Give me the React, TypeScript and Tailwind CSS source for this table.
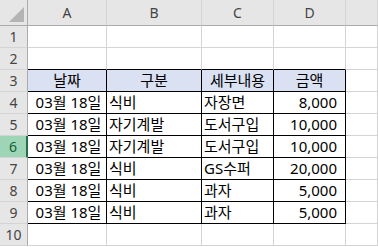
const columns = ["A", "B", "C", "D", ""];

type Row = [string, string, string, string];

const expenses: Row[] = [
  ["03월 18일", "식비", "자장면", "8,000"],
  ["03월 18일", "자기계발", "도서구입", "10,000"],
  ["03월 18일", "자기계발", "도서구입", "10,000"],
  ["03월 18일", "식비", "GS수퍼", "20,000"],
  ["03월 18일", "식비", "과자", "5,000"],
  ["03월 18일", "식비", "과자", "5,000"],
];

const heading: Row = ["날짜", "구분", "세부내용", "금액"];

const font = {
  fontFamily: '"Noto Sans", "Noto Sans CJK KR", sans-serif',
};

function ColumnHeader({ label }: { label: string }) {
  return (
    <div className="flex items-center justify-center border-r border-b border-r-[#d4d4d4] border-b-[#ababab] bg-[#e6e6e6] text-[14px] text-[#444]">
      {label}
    </div>
  );
}

function RowHeader({ n, active }: { n: number; active: boolean }) {
  return (
    <div
      className={
        active
          ? "flex items-center justify-center border-r-2 border-b border-r-[#217346] border-b-[#d4d4d4] bg-[#9fd5b7] text-[14px] text-[#0f6233]"
          : "flex items-center justify-center border-r border-b border-r-[#ababab] border-b-[#d4d4d4] bg-[#e6e6e6] text-[14px] text-[#444]"
      }
    >
      {n}
    </div>
  );
}

function Cell({
  text = "",
  col,
  row,
}: {
  text?: string;
  col: number;
  row: number;
}) {
  const inTable = col < 4 && row >= 3 && row <= 9;
  const bottomDark = col < 4 && row >= 2 && row <= 9;
  const isHead = row === 3 && col < 4;

  let align = "justify-start pl-[2px]";
  if (isHead) align = "justify-center";
  else if (col === 0) align = "justify-center pl-[3px]";
  else if (col === 3) align = "justify-end pr-[8px]";

  return (
    <div
      className={[
        "flex items-center overflow-hidden whitespace-nowrap border-r border-b text-[15px] leading-none text-black",
        inTable ? "border-r-black" : "border-r-[#d4d4d4]",
        bottomDark ? "border-b-black" : "border-b-[#d4d4d4]",
        isHead ? "bg-[#d9e1f2]" : "bg-white",
        align,
      ].join(" ")}
    >
      {text}
    </div>
  );
}

export default function App() {
  const body: (Row | null)[] = [null, null, heading, ...expenses, null];

  return (
    <div
      className="grid h-[247px] w-[378px] grid-cols-[28px_79px_95px_72px_72px_1fr] grid-rows-[26px_repeat(10,22px)] overflow-hidden bg-white"
      style={font}
    >
      {/* select-all corner with its grey triangle */}
      <div className="relative border-r border-b border-r-[#ababab] border-b-[#ababab] bg-[#e6e6e6]">
        <div className="absolute right-[3px] bottom-[3px] size-[15px] bg-[#b4b4b4] [clip-path:polygon(100%_0,100%_100%,0_100%)]" />
      </div>
      {columns.map((c, i) => (
        <ColumnHeader key={i} label={c} />
      ))}

      {body.map((row, r) => {
        const n = r + 1;
        return [
          <RowHeader key={`h${n}`} n={n} active={n === 6} />,
          ...[0, 1, 2, 3, 4].map((c) => (
            <Cell key={`${n}-${c}`} col={c} row={n} text={row && c < 4 ? row[c] : ""} />
          )),
        ];
      })}
    </div>
  );
}
